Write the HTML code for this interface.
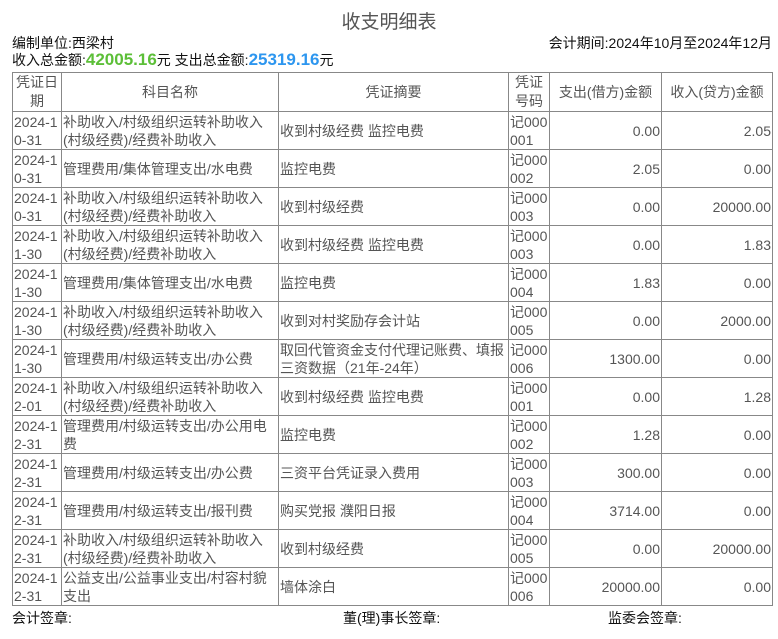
<!DOCTYPE html>
<html><head><meta charset="utf-8"><style>
body{margin:0;width:778px;height:639px;background:#fff;font-family:"Liberation Sans","Noto Sans CJK SC",sans-serif;color:#333;font-size:14px;position:relative;overflow:hidden}
.t{position:absolute;left:0;width:778px;top:7px;text-align:center;font-size:19px;color:#555}
.a{position:absolute;white-space:nowrap;font-size:14px;color:#111}
table{position:absolute;left:12px;top:72px;border-collapse:collapse;table-layout:fixed;width:760px}
td{border:1px solid #888;padding:0 1px;font-size:14px;line-height:18px;height:37px;color:#555;overflow:hidden;word-break:break-all;vertical-align:middle}
th{border:1px solid #888;font-weight:normal;font-size:14px;line-height:19px;height:38px;color:#555;text-align:center;padding:0}
.r{text-align:right}
</style></head><body>
<div class="t">收支明细表</div>
<div class="a" style="left:12px;top:33px">编制单位:西梁村</div>
<div class="a" style="right:6px;top:33px">会计期间:2024年10月至2024年12月</div>
<div class="a" style="left:12px;top:50px">收入总金额:<b style="color:#5cbf38;font-size:17px">42005.16</b>元 支出总金额:<b style="color:#2d96ef;font-size:17px">25319.16</b>元</div>
<table>
<colgroup><col style="width:49px"><col style="width:217px"><col style="width:230px"><col style="width:41px"><col style="width:112px"><col style="width:111px"></colgroup>
<tr><th>凭证日期</th><th>科目名称</th><th>凭证摘要</th><th>凭证号码</th><th>支出(借方)金额</th><th>收入(贷方)金额</th></tr>
<tr><td>2024-10-31</td><td>补助收入/村级组织运转补助收入(村级经费)/经费补助收入</td><td>收到村级经费 监控电费</td><td>记000001</td><td class="r">0.00</td><td class="r">2.05</td></tr>
<tr><td>2024-10-31</td><td>管理费用/集体管理支出/水电费</td><td>监控电费</td><td>记000002</td><td class="r">2.05</td><td class="r">0.00</td></tr>
<tr><td>2024-10-31</td><td>补助收入/村级组织运转补助收入(村级经费)/经费补助收入</td><td>收到村级经费</td><td>记000003</td><td class="r">0.00</td><td class="r">20000.00</td></tr>
<tr><td>2024-11-30</td><td>补助收入/村级组织运转补助收入(村级经费)/经费补助收入</td><td>收到村级经费 监控电费</td><td>记000003</td><td class="r">0.00</td><td class="r">1.83</td></tr>
<tr><td>2024-11-30</td><td>管理费用/集体管理支出/水电费</td><td>监控电费</td><td>记000004</td><td class="r">1.83</td><td class="r">0.00</td></tr>
<tr><td>2024-11-30</td><td>补助收入/村级组织运转补助收入(村级经费)/经费补助收入</td><td>收到对村奖励存会计站</td><td>记000005</td><td class="r">0.00</td><td class="r">2000.00</td></tr>
<tr><td>2024-11-30</td><td>管理费用/村级运转支出/办公费</td><td>取回代管资金支付代理记账费、填报三资数据（21年-24年）</td><td>记000006</td><td class="r">1300.00</td><td class="r">0.00</td></tr>
<tr><td>2024-12-01</td><td>补助收入/村级组织运转补助收入(村级经费)/经费补助收入</td><td>收到村级经费 监控电费</td><td>记000001</td><td class="r">0.00</td><td class="r">1.28</td></tr>
<tr><td>2024-12-31</td><td>管理费用/村级运转支出/办公用电费</td><td>监控电费</td><td>记000002</td><td class="r">1.28</td><td class="r">0.00</td></tr>
<tr><td>2024-12-31</td><td>管理费用/村级运转支出/办公费</td><td>三资平台凭证录入费用</td><td>记000003</td><td class="r">300.00</td><td class="r">0.00</td></tr>
<tr><td>2024-12-31</td><td>管理费用/村级运转支出/报刊费</td><td>购买党报 濮阳日报</td><td>记000004</td><td class="r">3714.00</td><td class="r">0.00</td></tr>
<tr><td>2024-12-31</td><td>补助收入/村级组织运转补助收入(村级经费)/经费补助收入</td><td>收到村级经费</td><td>记000005</td><td class="r">0.00</td><td class="r">20000.00</td></tr>
<tr><td>2024-12-31</td><td>公益支出/公益事业支出/村容村貌支出</td><td>墙体涂白</td><td>记000006</td><td class="r">20000.00</td><td class="r">0.00</td></tr>
</table>
<div class="a" style="left:12px;top:608px">会计签章:</div>
<div class="a" style="left:343px;top:608px">董(理)事长签章:</div>
<div class="a" style="left:608px;top:608px">监委会签章:</div>
</body></html>
